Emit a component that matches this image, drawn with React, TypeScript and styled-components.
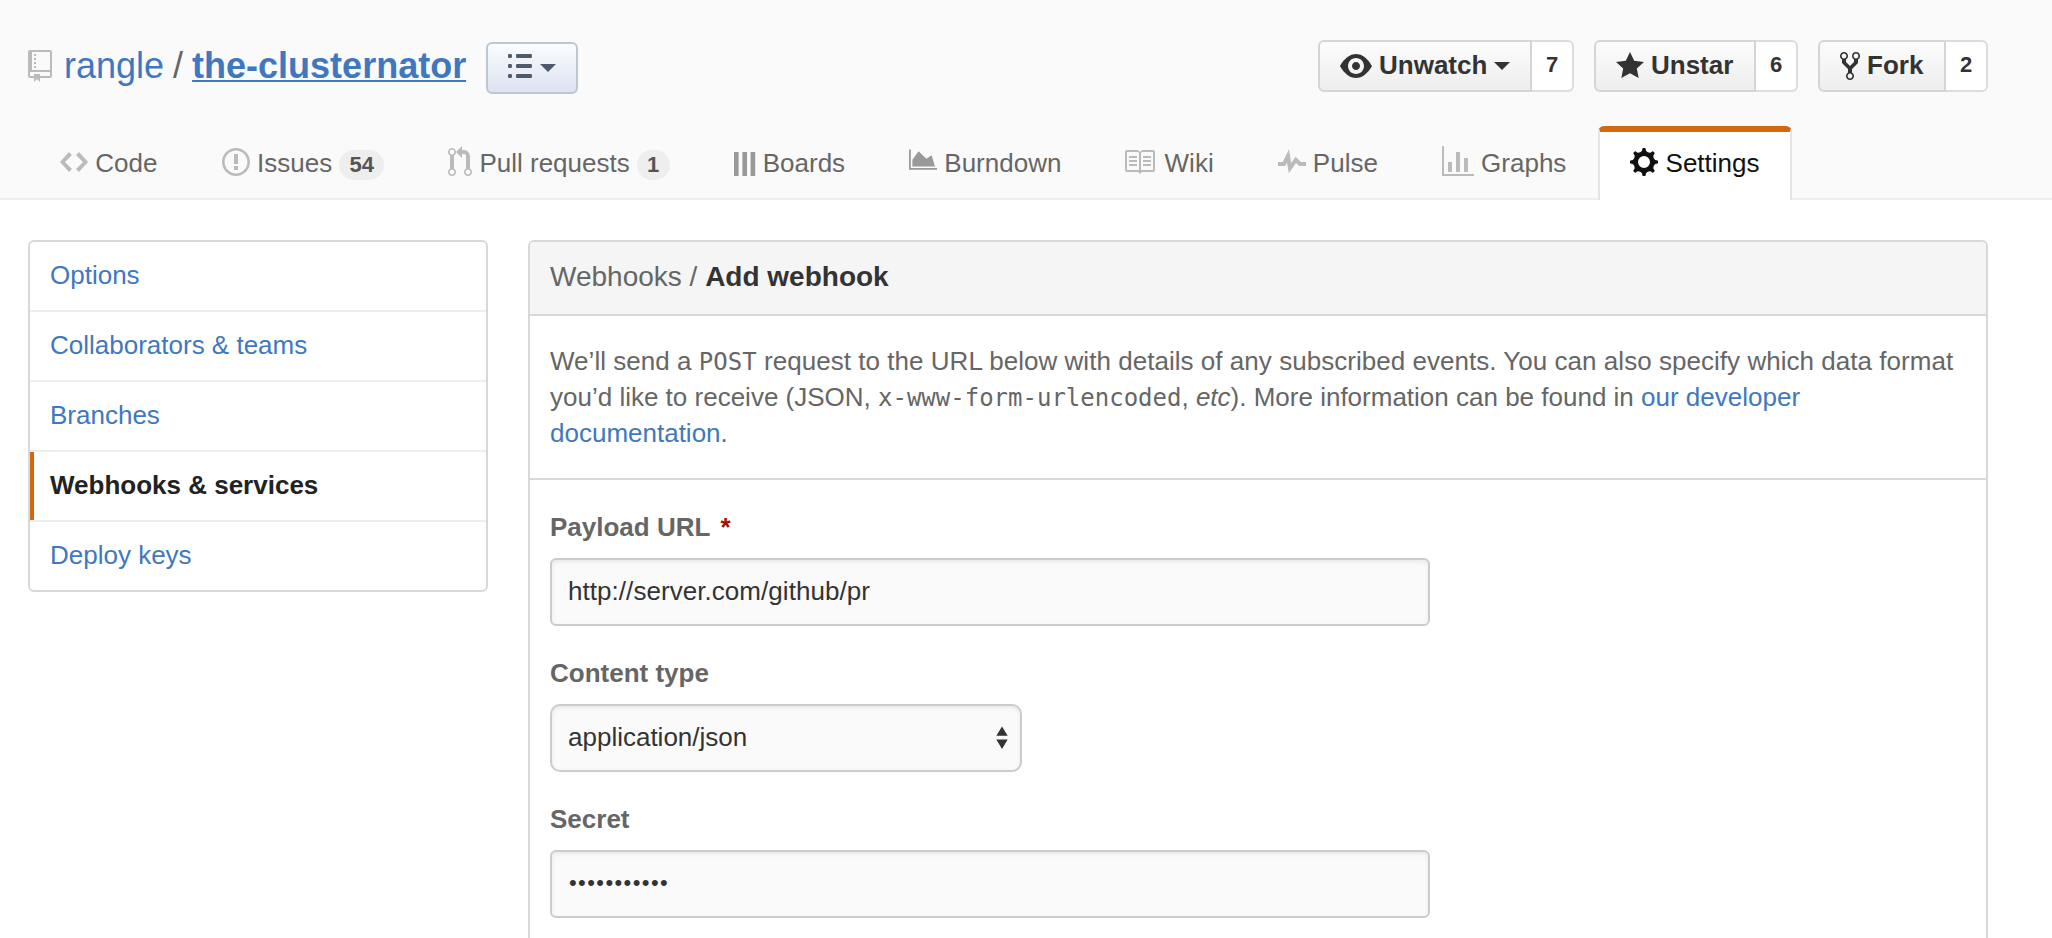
import React from "react";
import styled, { createGlobalStyle } from "styled-components";

const GlobalStyle = createGlobalStyle`
  *, *::before, *::after { box-sizing: border-box; }
  html, body { margin: 0; padding: 0; background: #fff; }
  body {
    height: 938px;
    overflow: hidden;
    font-family: "Liberation Sans", Arial, sans-serif;
    font-size: 26px;
    line-height: 36px;
    color: #666;
  }
  a { color: #4078c0; text-decoration: none; }
`;

// Eight teeth around a ring, on a 14x16 grid.
const gearPath = () => {
  const points: string[] = [];
  for (let i = 0; i < 8; i++) {
    const turn = (i * Math.PI) / 4;
    const corners: [number, number][] = [[-1.7, -5], [-1, -5.6], [-0.8, -6.75], [-0.5, -7], [0.5, -7], [0.8, -6.75], [1, -5.6], [1.7, -5]];
    corners.forEach(([x, y]) => {
      const px = 7 + x * Math.cos(turn) - y * Math.sin(turn);
      const py = 8 + x * Math.sin(turn) + y * Math.cos(turn);
      points.push(`${px.toFixed(2)} ${py.toFixed(2)}`);
    });
  }
  return `M${points.join("L")}ZM7 5a3 3 0 1 0 0 6a3 3 0 1 0 0-6z`;
};

const icons = {
  repo: { w: 12, d: "M4 9H3V8h1v1zm0-3H3v1h1V6zm0-2H3v1h1V4zm0-2H3v1h1V2zm8-1v12c0 .55-.45 1-1 1H6v2l-1.5-1.5L3 16v-2H1c-.55 0-1-.45-1-1V1c0-.55.45-1 1-1h10c.55 0 1 .45 1 1zm-1 10H1v2h2v-1h3v1h5v-2zm0-10H2v9h9V1z" },
  code: { w: 14, d: "M9.5 3L8 4.5 11.5 8 8 11.5 9.5 13 14 8 9.5 3zm-5 0L0 8l4.5 5L6 11.5 2.5 8 6 4.5 4.5 3z" },
  issue: { w: 14, d: "M7 2.3c3.14 0 5.7 2.56 5.7 5.7s-2.56 5.7-5.7 5.7A5.71 5.71 0 0 1 1.3 8c0-3.14 2.56-5.7 5.7-5.7zM7 1C3.14 1 0 4.14 0 8s3.14 7 7 7 7-3.14 7-7-3.14-7-7-7zm1 3H6v5h2V4zm0 6H6v2h2v-2z" },
  pull: { w: 12, d: "M11 11.28V5c-.03-.78-.34-1.47-.94-2.06C9.46 2.35 8.78 2.03 8 2H7V0L4 3l3 3V4h1c.27.02.48.11.69.31.21.2.3.42.31.69v6.28A1.993 1.993 0 0 0 10 15a1.993 1.993 0 0 0 1-3.72zm-1 2.92c-.66 0-1.2-.55-1.2-1.2 0-.65.55-1.2 1.2-1.2.65 0 1.2.55 1.2 1.2 0 .65-.55 1.2-1.2 1.2zM4 3c0-1.11-.89-2-2-2a1.993 1.993 0 0 0-1 3.72v6.56A1.993 1.993 0 0 0 2 15a1.993 1.993 0 0 0 1-3.72V4.72c.59-.34 1-.98 1-1.72zm-.8 10c0 .66-.55 1.2-1.2 1.2-.65 0-1.2-.55-1.2-1.2 0-.65.55-1.2 1.2-1.2.65 0 1.2.55 1.2 1.2zM2 4.2C1.34 4.2.8 3.65.8 3c0-.65.55-1.2 1.2-1.2.65 0 1.2.55 1.2 1.2 0 .65-.55 1.2-1.2 1.2z" },
  boards: { w: 11, d: "M0 3h2.3v12H0zM4.2 3h2.3v12H4.2zM8.3 3h2.3v12H8.3z" },
  burndown: { w: 14, d: "M0 1.7h.9v9.3H14v.9H0zM1.7 10.3V6.9L4.8 2.6 8.7 6.4 11.3 4.6 13 10.3z" },
  book: { w: 16, d: "M2 5h4v1H2V5zm0 3h4V7H2v1zm0 2h4V9H2v1zm11-5H9v1h4V5zm0 2H9v1h4V7zm0 2H9v1h4V9zm2-6v9c0 .55-.45 1-1 1H8.5l-1 1-1-1H1c-.55 0-1-.45-1-1V3c0-.55.45-1 1-1h5.5l1 1 1-1H14c.55 0 1 .45 1 1zm-8 .5L6.5 3H1v9h6V3.5zm7-.5H8.5l-.5.5V12h6V3z" },
  pulse: { w: 14, d: "M11.5 8L8.8 5.4 6.6 8.5 5.5 1.6 2.38 8H0v2h3.6l.9-1.8.9 5.4L9 8.5l1.6 1.5H14V8h-2.5z" },
  graph: { w: 16, d: "M16 14v1H0V0h1v14h15zM5 13H3V8h2v5zm4 0H7V3h2v10zm4 0h-2V6h2v7z" },
  gear: { w: 14, d: gearPath() },
  eye: { w: 16, d: "M8.06 2C3 2 0 8 0 8s3 6 8.06 6C13 14 16 8 16 8s-3-6-7.94-6zM8 12c-2.2 0-4-1.78-4-4 0-2.2 1.8-4 4-4 2.22 0 4 1.8 4 4 0 2.22-1.78 4-4 4zm2-4c0 1.11-.89 2-2 2-1.11 0-2-.89-2-2 0-1.11.89-2 2-2 1.11 0 2 .89 2 2z" },
  star: { w: 14, d: "M14 6l-4.9-.64L7 1 4.9 5.36 0 6l3.6 3.26L2.67 14 7 11.67 11.33 14l-.93-4.74z" },
  fork: { w: 10, d: "M8 1a1.993 1.993 0 0 0-1 3.72V6L5 8 3 6V4.72A1.993 1.993 0 0 0 2 1a1.993 1.993 0 0 0-1 3.72V6.5l3 3v1.78A1.993 1.993 0 0 0 5 15a1.993 1.993 0 0 0 1-3.72V9.5l3-3V4.72A1.993 1.993 0 0 0 8 1zM2 4.2C1.34 4.2.8 3.65.8 3c0-.65.55-1.2 1.2-1.2.65 0 1.2.55 1.2 1.2 0 .65-.55 1.2-1.2 1.2zm3 10c-.66 0-1.2-.55-1.2-1.2 0-.65.55-1.2 1.2-1.2.65 0 1.2.55 1.2 1.2 0 .65-.55 1.2-1.2 1.2zm3-10c-.66 0-1.2-.55-1.2-1.2 0-.65.55-1.2 1.2-1.2.65 0 1.2.55 1.2 1.2 0 .65-.55 1.2-1.2 1.2z" },
  list: { w: 12, d: "M2 13c0 .59 0 1-.59 1H.59C0 14 0 13.59 0 13c0-.59 0-1 .59-1h.81c.59 0 .59.41.59 1H2zm2.59-9h6.81c.59 0 .59-.41.59-1 0-.59 0-1-.59-1H4.59C4 2 4 2.41 4 3c0 .59 0 1 .59 1zM1.41 7H.59C0 7 0 7.41 0 8c0 .59 0 1 .59 1h.81c.59 0 .59-.41.59-1 0-.59 0-1-.59-1h.01zm0-5H.59C0 2 0 2.41 0 3c0 .59 0 1 .59 1h.81c.59 0 .59-.41.59-1 0-.59 0-1-.59-1h.01zm10 5H4.59C4 7 4 7.41 4 8c0 .59 0 1 .59 1h6.81c.59 0 .59-.41.59-1 0-.59 0-1-.59-1h.01zm0 5H4.59C4 12 4 12.41 4 13c0 .59 0 1 .59 1h6.81c.59 0 .59-.41.59-1 0-.59 0-1-.59-1h.01z" },
};

type IconName = keyof typeof icons;

const Svg = styled.svg`
  display: block;
  flex: none;
  fill: currentColor;
`;

const Icon = ({ name }: { name: IconName }) => {
  const { w, d } = icons[name];
  return (
    <Svg width={w * 2} height={32} viewBox={`0 0 ${w} 16`} aria-hidden="true">
      <path fillRule="evenodd" d={d} />
    </Svg>
  );
};

const PageHead = styled.header`
  height: 200px;
  padding: 40px 64px 0 28px;
  display: flex;
  flex-direction: column;
  justify-content: space-between;
  background: #fafafa;
  border-bottom: 2px solid #eee;
`;

const TitleRow = styled.div`
  display: flex;
  justify-content: space-between;
  align-items: flex-start;
  height: 54px;
`;

const RepoTitle = styled.h1`
  display: flex;
  align-items: center;
  margin: 0;
  height: 52px;
  font-size: 36px;
  line-height: 48px;
  font-weight: 400;
  color: #666;
`;

const RepoIcon = styled.span`
  color: #bbb;
  margin-right: 12px;
`;

const Slash = styled.span`
  margin: 0 9px;
`;

const RepoName = styled.a`
  font-weight: 700;
  text-decoration: underline;
  text-decoration-thickness: 2px;
  text-underline-offset: 2px;
  text-decoration-skip-ink: none;
`;

const Caret = styled.span`
  width: 0;
  height: 0;
  border: 8px solid transparent;
  border-top-color: currentColor;
  border-bottom-width: 0;
`;

const ListButton = styled.button`
  display: flex;
  align-items: center;
  gap: 8px;
  flex: none;
  width: 92px;
  height: 52px;
  margin: 4px 0 0 20px;
  padding: 0 0 4px 20px;
  color: #4f5a6b;
  background: linear-gradient(#fafdff, #dce3f1);
  border: 2px solid #bdc7d0;
  border-radius: 6px;

  ${Caret} {
    margin-top: 4px;
  }
`;

const Actions = styled.div`
  display: flex;
  gap: 20px;
`;

const ActionGroup = styled.div`
  display: flex;
`;

const ActionButton = styled.button<{ $width: number }>`
  display: flex;
  align-items: center;
  gap: 7px;
  width: ${(p) => p.$width}px;
  height: 52px;
  padding: 0 0 2px 20px;
  font: 700 26px/40px "Liberation Sans", Arial, sans-serif;
  color: #333;
  background: linear-gradient(#fcfcfc, #eee);
  border: 2px solid #d5d5d5;
  border-radius: 6px 0 0 6px;

  ${Svg} {
    margin-top: 2px;
  }

  ${Caret} {
    margin: 2px 0 0 0;
  }
`;

const ActionCount = styled.a`
  width: 42px;
  height: 52px;
  border: 2px solid #ddd;
  border-left: 0;
  border-radius: 0 6px 6px 0;
  background: #fff;
  font-size: 22px;
  font-weight: 700;
  line-height: 45px;
  text-align: center;
  color: #333;
`;

const TabBar = styled.nav`
  display: flex;
  height: 74px;
  margin-bottom: -2px;
`;

const Tab = styled.a<{ $active?: boolean }>`
  display: flex;
  align-items: center;
  gap: 7.2px;
  height: 74px;
  padding: 0 30px 6px;
  white-space: nowrap;
  color: ${(p) => (p.$active ? "#111" : "#666")};
  background: ${(p) => (p.$active ? "#fff" : "transparent")};
  border: 2px solid ${(p) => (p.$active ? "#e5e5e5" : "transparent")};
  border-top: 6px solid ${(p) => (p.$active ? "#d26911" : "transparent")};
  border-bottom: 0;
  border-radius: 6px 6px 0 0;

  &:first-child {
    padding-right: 30.5px;
  }
`;

const TabIcon = styled.span<{ $color: string }>`
  display: flex;
  margin-bottom: 2px;
  color: ${(p) => p.$color};
`;

const Counter = styled.span`
  height: 30px;
  margin: 4px 0 0;
  padding: 0 10.2px;
  border-radius: 20px;
  background: #eee;
  color: #555;
  font-size: 22px;
  font-weight: 700;
  line-height: 29px;
`;

const Content = styled.div`
  display: flex;
  align-items: flex-start;
  justify-content: space-between;
  padding: 40px 64px 0 28px;
`;

const Menu = styled.nav`
  width: 460px;
  border: 2px solid #d8d8d8;
  border-radius: 6px;
  overflow: hidden;
`;

const MenuItem = styled.a<{ $active?: boolean }>`
  display: block;
  height: 70px;
  padding-left: 20px;
  box-shadow: inset 0 -2px #eee${(p) => p.$active && ", inset 4px 0 #d26911"};
  line-height: 67px;
  color: ${(p) => (p.$active ? "#222" : "#4078c0")};
  font-weight: ${(p) => (p.$active ? 700 : 400)};

  &:last-child {
    height: 68px;
    box-shadow: none;
  }
`;

const Panel = styled.main`
  width: 1460px;
  height: 698px;
  border: 2px solid #d8d8d8;
  border-bottom: 0;
  border-radius: 6px 6px 0 0;
`;

const PanelHeading = styled.h3`
  margin: 0;
  height: 74px;
  padding-left: 20px;
  border-bottom: 2px solid #d8d8d8;
  border-radius: 4px 4px 0 0;
  background: #f5f5f5;
  font-size: 28px;
  font-weight: 400;
  line-height: 70px;
`;

const Strong = styled.strong`
  color: #333;
`;

const Intro = styled.p`
  margin: 0;
  height: 164px;
  padding: 27px 20px 0;
  border-bottom: 2px solid #d8d8d8;
  white-space: nowrap;
`;

const WideLine = styled.span`
  letter-spacing: 0.035px;
`;

const Code = styled.code`
  font-family: "DejaVu Sans Mono", monospace;
  font-size: 24px;
  line-height: 1;
`;

const Form = styled.form`
  display: flex;
  flex-direction: column;
  gap: 30px;
  padding: 30px 20px 0;
`;

const Field = styled.div`
  height: 116px;
`;

const Label = styled.label`
  display: block;
  height: 48px;
  font-weight: 700;
  line-height: 34px;
`;

const Required = styled.span`
  margin-left: 10px;
  color: #9f1006;
`;

const TextInput = styled.input`
  display: block;
  width: 880px;
  height: 68px;
  padding: 0 16px 2px;
  font: 400 26px/40px "Liberation Sans", Arial, sans-serif;
  letter-spacing: 0.05px;
  color: #333;
  background: #fafafa;
  border: 2px solid #ccc;
  border-radius: 6px;
  box-shadow: inset 0 2px 4px rgba(0, 0, 0, 0.075);
  outline: none;
`;

const SecretInput = styled(TextInput)`
  font-size: 22px;
  letter-spacing: 1.4px;
  padding-left: 17px;
`;

const SelectBox = styled.div`
  display: flex;
  align-items: center;
  justify-content: space-between;
  width: 472px;
  height: 68px;
  padding: 0 12px 2px 16px;
  color: #333;
  background: #fafafa;
  border: 2px solid #ccc;
  border-radius: 10px;
  box-shadow: inset 0 2px 4px rgba(0, 0, 0, 0.075);
`;

const Stepper = () => (
  <Svg width={12} height={24} viewBox="0 0 12 24" aria-hidden="true">
    <path d="M6 1.4L11.7 10.8H.3zM.3 14.6h11.4L6 24z" />
  </Svg>
);

const tabs: { icon: IconName; label: string; color?: string; count?: number; active?: boolean }[] = [
  { icon: "code", label: "Code" },
  { icon: "issue", label: "Issues", count: 54 },
  { icon: "pull", label: "Pull requests", count: 1 },
  { icon: "boards", label: "Boards", color: "#999" },
  { icon: "burndown", label: "Burndown", color: "#999" },
  { icon: "book", label: "Wiki" },
  { icon: "pulse", label: "Pulse" },
  { icon: "graph", label: "Graphs" },
  { icon: "gear", label: "Settings", color: "#111", active: true },
];

const menu = ["Options", "Collaborators & teams", "Branches", "Webhooks & services", "Deploy keys"];

export default function App() {
  return (
    <>
      <GlobalStyle />
      <PageHead>
        <TitleRow>
          <RepoTitle>
            <RepoIcon><Icon name="repo" /></RepoIcon>
            <a>rangle</a>
            <Slash>/</Slash>
            <RepoName>the-clusternator</RepoName>
            <ListButton aria-label="Lists">
              <Icon name="list" />
              <Caret />
            </ListButton>
          </RepoTitle>
          <Actions>
            <ActionGroup>
              <ActionButton $width={214}><Icon name="eye" />Unwatch<Caret /></ActionButton>
              <ActionCount>7</ActionCount>
            </ActionGroup>
            <ActionGroup>
              <ActionButton $width={162}><Icon name="star" />Unstar</ActionButton>
              <ActionCount>6</ActionCount>
            </ActionGroup>
            <ActionGroup>
              <ActionButton $width={128}><Icon name="fork" />Fork</ActionButton>
              <ActionCount>2</ActionCount>
            </ActionGroup>
          </Actions>
        </TitleRow>
        <TabBar>
          {tabs.map((t) => (
            <Tab key={t.label} $active={t.active}>
              <TabIcon $color={t.color ?? "#bbb"}><Icon name={t.icon} /></TabIcon>
              {t.label}
              {t.count !== undefined && <Counter>{t.count}</Counter>}
            </Tab>
          ))}
        </TabBar>
      </PageHead>
      <Content>
        <Menu>
          {menu.map((m) => (
            <MenuItem key={m} $active={m === "Webhooks & services"}>{m}</MenuItem>
          ))}
        </Menu>
        <Panel>
          <PanelHeading>Webhooks / <Strong>Add webhook</Strong></PanelHeading>
          <Intro>
            <WideLine>We’ll send a <Code>POST</Code> request to the URL below with details of any subscribed events. You can also specify which data format</WideLine><br />
            you’d like to receive (JSON, <Code>x-www-form-urlencoded</Code>, <em>etc</em>). More information can be found in <a>our developer<br />documentation</a>.
          </Intro>
          <Form>
            <Field>
              <Label>Payload URL<Required>*</Required></Label>
              <TextInput readOnly value="http://server.com/github/pr" />
            </Field>
            <Field>
              <Label>Content type</Label>
              <SelectBox>application/json<Stepper /></SelectBox>
            </Field>
            <Field>
              <Label>Secret</Label>
              <SecretInput readOnly value="•••••••••••" />
            </Field>
          </Form>
        </Panel>
      </Content>
    </>
  );
}
